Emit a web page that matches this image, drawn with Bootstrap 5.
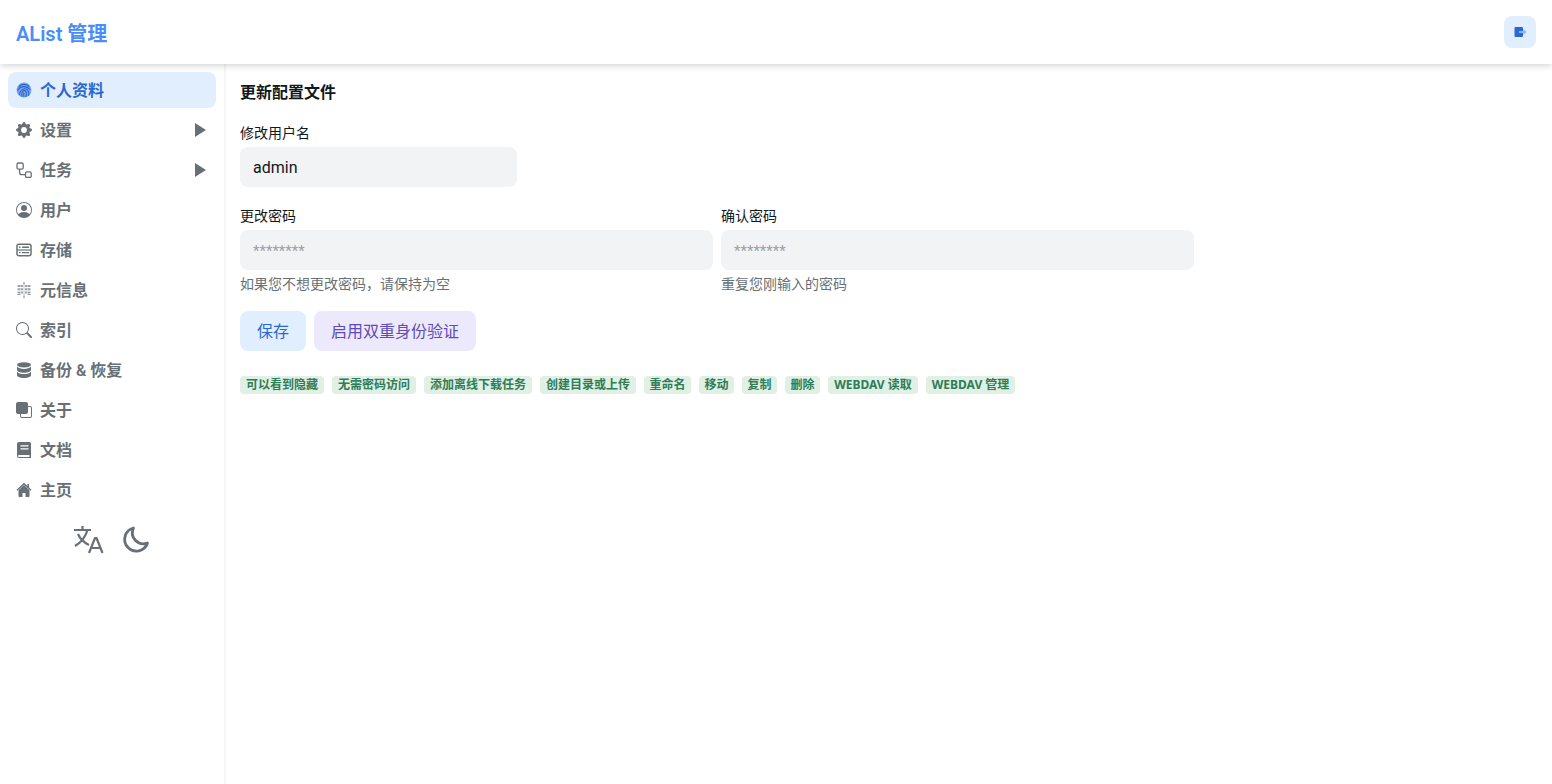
<!doctype html>
<html lang="zh">
<head>
<meta charset="utf-8">
<title>AList 管理</title>
<link href="https://cdn.jsdelivr.net/npm/bootstrap@5.3.0/dist/css/bootstrap.min.css" rel="stylesheet">
<style>
html,body{height:100%}
body{font-family:Roboto,"Noto Sans CJK SC",sans-serif;color:#11181c;background:#fff;overflow:hidden}
.top-bar{height:64px;padding:0 16px;background:#fff;box-shadow:0 2px 6px rgba(0,0,0,.16);position:relative;z-index:2}
.brand-name{font-size:20px;font-weight:600;color:#4a8dfa;line-height:1;padding:4px 0 0;margin:0}
.exit-btn{width:32px;height:32px;padding:0;border:0;border-radius:8px;background:#e1eefd}
.shell{height:720px}
.side-col{width:226px;flex:0 0 226px;border-right:2px solid #f5f6f7;padding:8px}
.side-link{height:36px;padding:2px 8px 0;border-radius:8px;color:#687076;font-size:16px;font-weight:600;gap:8px;margin-bottom:4px;line-height:1}
.side-link svg{width:16px;height:16px;flex:0 0 16px;fill:currentColor;margin-top:-2px}
.side-link:hover{color:#687076}
.side-link.on{background:#e1eefd;color:#2a68d2}
.caret-mark{margin-left:auto;width:0;height:0;border-left:11px solid #687076;border-top:7px solid transparent;border-bottom:7px solid transparent;margin:-2px 2px 0 auto}
.tool-row{gap:16px;margin-top:11px;color:#687076}
.tool-row svg{width:32px;height:32px}
.main-col{padding:17px 14px}
.page-title{font-size:16px;font-weight:700;line-height:24px;margin:0 0 20px;color:#11181c}
.field-label{font-size:14px;line-height:16px;margin:0 0 6px;display:block;color:#11181c}
.field-box{height:40px;border:0;border-radius:8px;background:#f1f3f5;padding:0 13px;font-size:16px;color:#11181c;box-shadow:none}
.field-box:focus{background:#f1f3f5}
.field-box::placeholder{color:#9ba1a6;font-size:15px}
.one-wide{width:277px;margin-bottom:21px}
.pw-grid{display:grid;grid-template-columns:473px 473px;gap:8px;margin-bottom:17px}
.hint-line{font-size:14px;line-height:20px;color:#687076;margin-top:4px}
.act-btn{height:40px;border:0;border-radius:8px;font-size:16px;padding:1px 17px 0;line-height:39px}
.act-save{background:#e1eefd;color:#2a68d2}
.act-2fa{background:#ede9fd;color:#5f4bb6}
.act-row{gap:8px;margin-bottom:25px}
.perm-row{gap:8px}
.perm-tag{font-family:"Noto Sans","Noto Sans CJK SC",sans-serif;font-size:12px;font-weight:700;line-height:18px;height:18px;padding:0 6px;border-radius:4px;background:#e0f0e4;color:#2f7c57;letter-spacing:0}
.perm-tag.tight{padding:0 5.5px}
</style>
</head>
<body>
<nav class="navbar top-bar d-flex justify-content-between align-items-center">
  <span class="navbar-brand brand-name">AList 管理</span>
  <button class="btn exit-btn d-flex align-items-center justify-content-center" aria-label="退出">
    <svg width="13" height="12" viewBox="0 0 13 12"><path fill="#2a68d2" d="M1.500 1h6.500A1 1 0 0 1 9 2v8a1 1 0 0 1-1 1H1.500a1 1 0 0 1-1-1V2a1 1 0 0 1 1-1z"/><path fill="#8fb4ee" d="M5 5h4.500V3.200L12.500 6 9.500 8.800V7H5z"/></svg>
  </button>
</nav>
<div class="d-flex shell">
  <aside class="side-col">
    <nav class="nav flex-column">
      <a class="nav-link side-link on d-flex align-items-center" href="#">
        <svg viewBox="0 0 16 16"><circle cx="8" cy="8" r="7.500" opacity=".55"/><g fill="none" stroke="currentColor" stroke-width="1.100"><path d="M3 5C5 1.500 11 1.500 13 5"/><path d="M1.500 8.500C4 4 10 3 14 7.500"/><path d="M3.500 13C3.500 7.500 9 5 12 8.500 13 10 13 12 12.500 14"/><path d="M6 14.500C5 10.500 7 8 9 8.500 11 9.500 10.500 12 10 15"/><path d="M8 15C7.500 13 7.500 11.500 8 10.500"/></g></svg>
        个人资料</a>
      <a class="nav-link side-link d-flex align-items-center" href="#">
        <svg viewBox="0 0 16 16"><path d="M9.405 1.050c-.413-1.400-2.397-1.400-2.810 0l-.1.340a1.464 1.464 0 0 1-2.105.872l-.31-.17c-1.283-.698-2.686.705-1.987 1.987l.169.311c.446.820.023 1.841-.872 2.105l-.34.1c-1.400.413-1.400 2.397 0 2.810l.34.1a1.464 1.464 0 0 1 .872 2.105l-.17.31c-.698 1.283.705 2.686 1.987 1.987l.311-.169a1.464 1.464 0 0 1 2.105.872l.1.34c.413 1.400 2.397 1.400 2.810 0l.1-.34a1.464 1.464 0 0 1 2.105-.872l.31.17c1.283.698 2.686-.705 1.987-1.987l-.169-.311a1.464 1.464 0 0 1 .872-2.105l.34-.1c1.400-.413 1.400-2.397 0-2.810l-.34-.1a1.464 1.464 0 0 1-.872-2.105l.17-.31c.698-1.283-.705-2.686-1.987-1.987l-.311.169a1.464 1.464 0 0 1-2.105-.872l-.1-.34zM8 10.930a2.929 2.929 0 1 1 0-5.860 2.929 2.929 0 0 1 0 5.858z"/></svg>
        设置<span class="caret-mark"></span></a>
      <a class="nav-link side-link d-flex align-items-center" href="#">
        <svg viewBox="0 0 16 16"><g fill="none" stroke="currentColor" stroke-width="1.300"><rect x="1" y="1" width="6.200" height="6.200" rx="1.400"/><rect x="9.500" y="9.800" width="5.700" height="5.700" rx="1.400"/><path d="M3.600 7.200v3.300q0 2.200 2.200 2.200h3.700"/></g></svg>
        任务<span class="caret-mark"></span></a>
      <a class="nav-link side-link d-flex align-items-center" href="#">
        <svg viewBox="0 0 16 16"><path d="M11 6a3 3 0 1 1-6 0 3 3 0 0 1 6 0z"/><path fill-rule="evenodd" d="M0 8a8 8 0 1 1 16 0A8 8 0 0 1 0 8zm8-7a7 7 0 0 0-5.468 11.370C3.242 11.226 4.805 10 8 10s4.757 1.225 5.468 2.370A7 7 0 0 0 8 1z"/></svg>
        用户</a>
      <a class="nav-link side-link d-flex align-items-center" href="#">
        <svg viewBox="0 0 16 16"><rect x="1" y="2.300" width="14" height="11.400" rx="1.800" fill="none" stroke="currentColor" stroke-width="1.500"/><path d="M1 8h14" stroke="currentColor" stroke-width="1.200"/><path d="M3 4.600h1.500v1.300H3zM6 4.600h7v1.300H6zM3 10h1.500v1.300H3zM6 10h7v1.300H6z"/></svg>
        存储</a>
      <a class="nav-link side-link d-flex align-items-center" href="#">
        <svg viewBox="0 0 16 16" opacity=".65"><path d="M7.300 0h1.400v2.500H7.300zM7.300 13.500h1.400V16H7.300zM1.500 3h3v2h-3zM5 3h2v2H5zM9 3h2v2H9zM11.500 3h3v2h-3zM1.500 6.200h3v2h-3zM5 6.200h2v2H5zM9 6.200h2v2H9zM11.500 6.200h3v2h-3zM1.500 9.400h3v2h-3zM5 9.400h2v2H5zM9 9.400h2v2H9zM11.500 9.400h3v2h-3zM1.500 12h3v1h-3zM11.500 12h3v1h-3z"/><path d="M7.300 2.500h1.400v11H7.300z" opacity=".4"/></svg>
        元信息</a>
      <a class="nav-link side-link d-flex align-items-center" href="#">
        <svg viewBox="0 0 16 16"><path d="M11.742 10.344a6.500 6.500 0 1 0-1.397 1.398h-.001c.03.04.062.078.098.115l3.850 3.850a1 1 0 0 0 1.415-1.414l-3.850-3.850a1.007 1.007 0 0 0-.115-.1zM12 6.500a5.500 5.500 0 1 1-11 0 5.500 5.500 0 0 1 11 0z"/></svg>
        索引</a>
      <a class="nav-link side-link d-flex align-items-center" href="#">
        <svg viewBox="0 0 16 16"><ellipse cx="8" cy="2.800" rx="7" ry="2.600"/><path d="M1 4.600C2 6.300 5 6.900 8 6.900s6-.6 7-2.300V8c0 1.500-3.100 2.700-7 2.700S1 9.500 1 8zM1 9.800c1 1.700 4 2.300 7 2.300s6-.6 7-2.300V13.200c0 1.500-3.100 2.700-7 2.700S1 14.700 1 13.200z"/></svg>
        备份 &amp; 恢复</a>
      <a class="nav-link side-link d-flex align-items-center" href="#">
        <svg viewBox="0 0 16 16"><path fill-rule="evenodd" d="M0 2a2 2 0 0 1 2-2h8a2 2 0 0 1 2 2v2h2a2 2 0 0 1 2 2v8a2 2 0 0 1-2 2H6a2 2 0 0 1-2-2v-2H2a2 2 0 0 1-2-2V2zm5 10v2a1 1 0 0 0 1 1h8a1 1 0 0 0 1-1V6a1 1 0 0 0-1-1h-2v5a2 2 0 0 1-2 2H5z"/></svg>
        关于</a>
      <a class="nav-link side-link d-flex align-items-center" href="#">
        <svg viewBox="0 0 16 16"><path fill-rule="evenodd" d="M3 0h10.500A1.500 1.500 0 0 1 15 1.500V16H3a2 2 0 0 1-2-2V2a2 2 0 0 1 2-2zM4.500 3.300v1.300h8V3.300zM4.500 6.300v1.300h8V6.300zM3 13a1 1 0 0 0 0 2h10.500v-2z"/></svg>
        文档</a>
      <a class="nav-link side-link d-flex align-items-center" href="#">
        <svg viewBox="0 0 16 16"><path d="M8 3 2.500 8.200V14a1 1 0 0 0 1 1H6.500v-4h3v4h3a1 1 0 0 0 1-1V8.200z"/><path d="M8 .8.500 7.800l.9 1L8 2.700l6.600 6.100.9-1-2.500-2.300V2h-1.500v2.100z"/></svg>
        主页</a>
    </nav>
    <div class="tool-row d-flex justify-content-center align-items-center">
      <svg viewBox="0 0 32 32" fill="none" stroke="currentColor" stroke-width="2.200" stroke-linejoin="round"><path d="M2 7h17M10.500 3v4M15.500 7C13.500 14 8 20 3 23M6 11C8 16 12 19.500 17 22"/><path d="M17 30 23 15h1.500l6 15M19 25h9.500"/></svg>
      <svg viewBox="0 0 32 32" fill="none" stroke="currentColor" stroke-width="2.800" stroke-linejoin="round"><path d="M13.500 5A11.700 11.700 0 1 0 27.500 20 11 11 0 0 1 13.500 5z"/></svg>
    </div>
  </aside>
  <main class="main-col flex-grow-1">
    <h1 class="page-title">更新配置文件</h1>
    <div class="one-wide">
      <label class="field-label" for="u1">修改用户名</label>
      <input id="u1" class="form-control field-box" value="admin">
    </div>
    <div class="pw-grid">
      <div>
        <label class="field-label" for="p1">更改密码</label>
        <input id="p1" class="form-control field-box" placeholder="********">
        <div class="form-text hint-line">如果您不想更改密码，请保持为空</div>
      </div>
      <div>
        <label class="field-label" for="p2">确认密码</label>
        <input id="p2" class="form-control field-box" placeholder="********">
        <div class="form-text hint-line">重复您刚输入的密码</div>
      </div>
    </div>
    <div class="d-flex act-row">
      <button class="btn act-btn act-save">保存</button>
      <button class="btn act-btn act-2fa">启用双重身份验证</button>
    </div>
    <div class="d-flex perm-row">
      <span class="badge perm-tag">可以看到隐藏</span>
      <span class="badge perm-tag">无需密码访问</span>
      <span class="badge perm-tag">添加离线下载任务</span>
      <span class="badge perm-tag">创建目录或上传</span>
      <span class="badge perm-tag tight">重命名</span>
      <span class="badge perm-tag tight">移动</span>
      <span class="badge perm-tag tight">复制</span>
      <span class="badge perm-tag tight">删除</span>
      <span class="badge perm-tag">WEBDAV 读取</span>
      <span class="badge perm-tag">WEBDAV 管理</span>
    </div>
  </main>
</div>
<script src="https://cdn.jsdelivr.net/npm/bootstrap@5.3.0/dist/js/bootstrap.bundle.min.js"></script>
</body>
</html>
